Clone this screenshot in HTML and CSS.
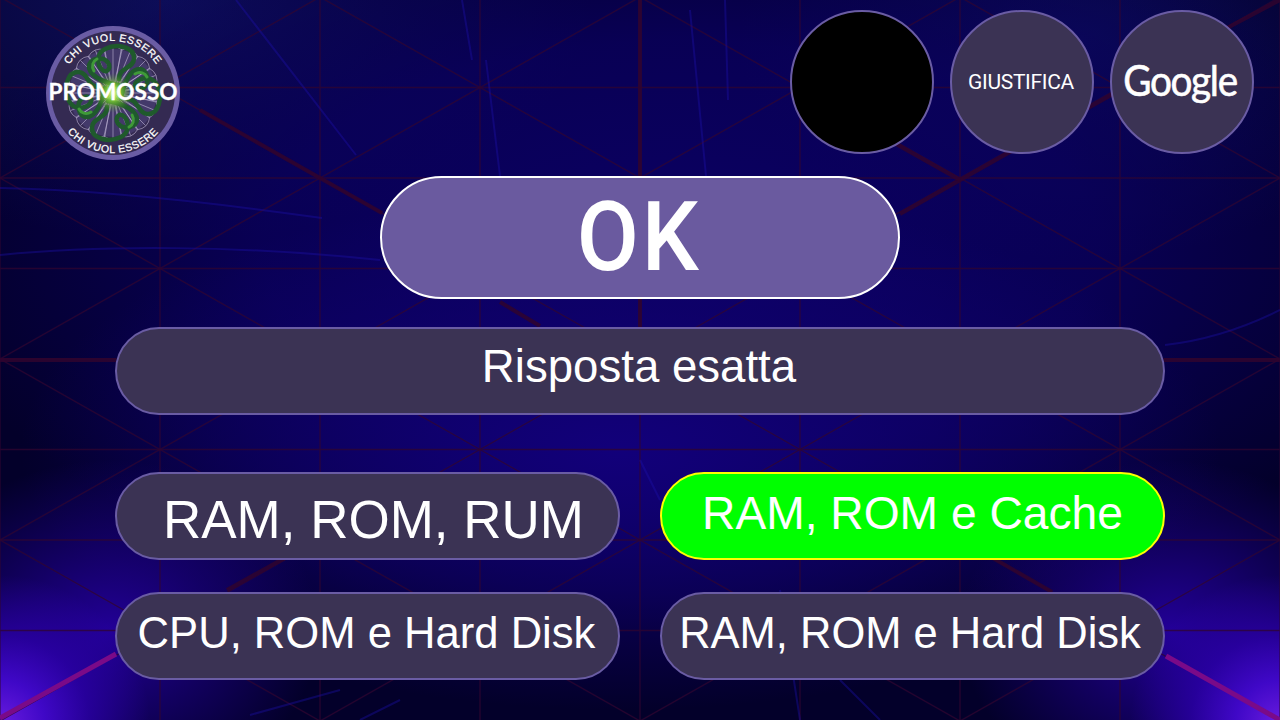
FILE: index.html
```html
<!DOCTYPE html>
<html lang="it">
<head>
<meta charset="utf-8">
<title>Chi vuol essere promosso</title>
<link rel="stylesheet" href="styles.css">
</head>
<body>
<svg class="backdrop" viewBox="0 0 1280 720" aria-hidden="true">
  <defs>
    <pattern id="lattice" width="320" height="181" patternUnits="userSpaceOnUse" y="-3">
      <path class="tile-line" d="M0 0L320 181M0 181L320 0"/>
      <path class="tile-line" d="M0 0H320M0 90.5H320M0 181H320M0 0V181M160 0V181M320 0V181"/>
    </pattern>
  </defs>
  <rect width="1280" height="720" fill="url(#lattice)"/>
  <g class="beam">
    <path d="M200 110L320 178L382 213"/>
    <path d="M640 0V176"/>
    <path d="M0 360H116"/>
    <path d="M1164 360H1280"/>
    <path d="M900 214L1120 90"/>
    <path d="M1227 28L1280 0"/>
    <path d="M880 135L960 180"/>
    <path d="M227 590L290 555"/>
    <path d="M991 557L1052 592"/>
    <path d="M500 302L540 326"/>
    <path d="M640 298V328"/>
  </g>
  <g class="beam-hot">
    <path d="M0 718L116 654"/>
    <path d="M1166 656L1280 720"/>
  </g>
  <g class="arc">
    <path d="M0 188C110 190 230 205 322 218"/>
    <path d="M0 255C100 245 240 245 380 260"/>
    <path d="M236 0L356 155"/>
    <path d="M462 0L472 60M486 60L500 176"/>
    <path d="M690 10L706 176M725 0L728 100"/>
    <path d="M1165 345C1210 340 1250 325 1280 310"/>
    <path d="M640 460L660 500M780 590L800 720M840 680L880 720"/>
    <path d="M400 700L360 720M340 690L250 715"/>
  </g>
</svg>

<main class="stage">
  <header class="topbar">
    <svg class="logo" viewBox="-68 -68 136 136" role="img" aria-label="Chi vuol essere promosso">
      <defs>
        <radialGradient id="core">
          <stop offset="0" stop-color="#e8ff9a"/>
          <stop offset=".35" stop-color="#8fdc3c" stop-opacity=".85"/>
          <stop offset="1" stop-color="#3c7a2a" stop-opacity="0"/>
        </radialGradient>
        <path id="arc-top" d="M-52 0A52 52 0 0 1 52 0"/>
        <path id="arc-bottom" d="M-60 0A60 60 0 0 0 60 0"/>
        <g id="spoke">
          <path class="spoke-line" d="M0 -4L-9 -43M0 -4L9 -43M0 -4L0 -46M-9 -43Q0 -50 9 -43"/>
        </g>
        <g id="knot">
          <path class="ribbon" d="M5 -8C-26 -14 -30 -30 -17 -34C-6 -37 0 -26 -6 -22C-14 -20 -20 -38 -8 -44C4 -50 22 -46 21 -34C20 -24 6 -26 6 -14"/>
          <path class="ribbon-hi" d="M-19 -22C-22 -27 -20 -32 -16 -34"/>
        </g>
      </defs>
      <circle class="logo-rim" r="67"/>
      <circle class="logo-face" r="62"/>
      <circle class="logo-inner" r="44"/>
      <g>
        <use href="#spoke"/><use href="#spoke" transform="rotate(22.5)"/><use href="#spoke" transform="rotate(45)"/><use href="#spoke" transform="rotate(67.5)"/>
        <use href="#spoke" transform="rotate(90)"/><use href="#spoke" transform="rotate(112.5)"/><use href="#spoke" transform="rotate(135)"/><use href="#spoke" transform="rotate(157.5)"/>
        <use href="#spoke" transform="rotate(180)"/><use href="#spoke" transform="rotate(202.5)"/><use href="#spoke" transform="rotate(225)"/><use href="#spoke" transform="rotate(247.5)"/>
        <use href="#spoke" transform="rotate(270)"/><use href="#spoke" transform="rotate(292.5)"/><use href="#spoke" transform="rotate(315)"/><use href="#spoke" transform="rotate(337.5)"/>
      </g>
      <g>
        <use href="#knot"/><use href="#knot" transform="rotate(90)"/><use href="#knot" transform="rotate(180)"/><use href="#knot" transform="rotate(270)"/>
      </g>
      <circle r="20" fill="url(#core)"/>
      <text class="logo-arc"><textPath href="#arc-top" startOffset="50%" text-anchor="middle">CHI VUOL ESSERE</textPath></text>
      <text class="logo-arc"><textPath href="#arc-bottom" startOffset="50%" text-anchor="middle">CHI VUOL ESSERE</textPath></text>
      <text class="logo-title" x="0" y="7" text-anchor="middle" textLength="129" lengthAdjust="spacingAndGlyphs">PROMOSSO</text>
    </svg>
    <nav class="lifelines">
      <div class="lifeline lifeline-empty"></div>
      <div class="lifeline"><span class="lifeline-text">GIUSTIFICA</span></div>
      <div class="lifeline"><span class="lifeline-brand">Google</span></div>
    </nav>
  </header>

  <section class="verdict"><span class="verdict-text">OK</span></section>
  <section class="question">Risposta esatta</section>

  <section class="answers">
    <div class="answer answer-large">RAM, ROM, RUM</div>
    <div class="answer answer-correct">RAM, ROM e Cache</div>
    <div class="answer answer-left">CPU, ROM e Hard Disk</div>
    <div class="answer answer-right">RAM, ROM e Hard Disk</div>
  </section>
</main>
</body>
</html>
```
FILE: styles.css
```css
* { box-sizing: border-box; }

html, body { margin: 0; height: 100%; }

body {
  position: relative;
  width: 1280px;
  height: 720px;
  overflow: hidden;
  font-family: "Liberation Sans", Arial, sans-serif;
  color: #fff;
  background:
    radial-gradient(circle 150px at 0 725px, #6a1ce0 0%, rgba(66, 8, 205, .95) 30%, rgba(48, 0, 180, .65) 60%, rgba(40, 0, 160, 0) 100%),
    radial-gradient(circle 150px at 1280px 725px, #6a1ce0 0%, rgba(66, 8, 205, .95) 30%, rgba(48, 0, 180, .65) 60%, rgba(40, 0, 160, 0) 100%),
    radial-gradient(ellipse 210px 170px at 110px 630px, rgba(40, 0, 170, .85) 0%, rgba(36, 0, 160, .45) 50%, rgba(30, 0, 140, 0) 100%),
    radial-gradient(ellipse 210px 170px at 1170px 630px, rgba(40, 0, 170, .85) 0%, rgba(36, 0, 160, .45) 50%, rgba(30, 0, 140, 0) 100%),
    radial-gradient(ellipse 600px 260px at 620px 450px, #12007a 0%, rgba(16, 0, 110, .6) 55%, rgba(8, 0, 70, 0) 100%),
    radial-gradient(ellipse 760px 380px at 680px 250px, #0b0064 0%, rgba(10, 0, 95, .8) 55%, rgba(8, 0, 70, 0) 100%),
    radial-gradient(ellipse 420px 240px at 170px 0, #0d0e58 0%, rgba(12, 13, 85, 0) 100%),
    radial-gradient(ellipse 340px 220px at 1080px 40px, #0a0a54 0%, rgba(10, 10, 82, 0) 100%),
    #03002a;
}

.backdrop {
  position: absolute;
  inset: 0;
  width: 1280px;
  height: 720px;
}

.tile-line {
  fill: none;
  stroke: #30042e;
  stroke-opacity: .75;
  stroke-width: 1.3;
}

.beam path {
  fill: none;
  stroke: #30042e;
  stroke-opacity: .85;
  stroke-width: 4;
}

.beam-hot path {
  fill: none;
  stroke: #7a0a88;
  stroke-width: 5;
}

.arc path {
  fill: none;
  stroke: #1c10a8;
  stroke-opacity: .4;
  stroke-width: 2;
}

.stage {
  position: relative;
  display: flex;
  flex-direction: column;
  height: 720px;
  padding: 10px 26px 0 115px;
}

.topbar {
  display: flex;
  justify-content: space-between;
  align-items: flex-start;
  height: 154px;
  margin-left: -70px;
}

.logo {
  width: 136px;
  height: 136px;
  margin-top: 15px;
  overflow: visible;
}

.logo-rim { fill: #6a5ca4; }
.logo-face { fill: #342a52; }
.logo-inner { fill: #43396a; }

.spoke-line {
  fill: none;
  stroke: #b9aed0;
  stroke-width: .6;
}

.ribbon {
  fill: none;
  stroke: #1f5a2c;
  stroke-width: 4.5;
  stroke-linecap: round;
}

.ribbon-hi {
  fill: none;
  stroke: #3f9a38;
  stroke-width: 3;
  stroke-linecap: round;
}

.logo-arc {
  fill: #fff;
  stroke: #fff;
  stroke-width: .25;
  font-family: "Liberation Sans", Arial, sans-serif;
  font-size: 10.5px;
  letter-spacing: .6px;
}

.logo-title {
  fill: #fff;
  stroke: #fff;
  stroke-width: .3;
  font-family: Lato, sans-serif;
  font-size: 22px;
  font-weight: 700;
}

.lifelines {
  display: flex;
  gap: 16px;
}

.lifeline {
  display: flex;
  align-items: center;
  justify-content: center;
  width: 144px;
  height: 144px;
  border: 2.5px solid #6a5ca4;
  border-radius: 50%;
  background: #3b3354;
}

.lifeline-empty { background: #000; }

.lifeline-text {
  margin-right: 2px;
  font-family: Roboto, sans-serif;
  font-size: 21px;
  letter-spacing: -.3px;
}

.lifeline-brand {
  display: inline-block;
  margin: -6px 0 0 -3px;
  font-family: Lato, sans-serif;
  font-size: 43px;
  letter-spacing: -1.5px;
  -webkit-text-stroke: .6px #fff;
  transform: scaleX(.9);
}

.verdict {
  align-self: center;
  display: flex;
  align-items: center;
  justify-content: center;
  width: 520px;
  height: 123px;
  margin: 12px 0 0 -89px;
  border: 2.5px solid #fff;
  border-radius: 62px;
  background: #6a5a9f;
}

.verdict-text {
  display: inline-block;
  margin-left: -2px;
  font-family: Roboto, sans-serif;
  font-size: 97px;
  font-weight: 500;
  letter-spacing: 3px;
  line-height: 1;
  transform: scaleX(.93);
}

.question {
  display: flex;
  align-items: center;
  justify-content: center;
  width: 1050px;
  height: 88px;
  margin-top: 28px;
  padding: 0 2px 8px 0;
  border: 2.5px solid #6a5ca4;
  border-radius: 44px;
  background: #3b3354;
  font-size: 45.6px;
}

.answers {
  display: grid;
  grid-template-columns: 505px 505px;
  gap: 32px 40px;
  width: 1050px;
  margin-top: 57px;
}

.answer {
  display: flex;
  align-items: center;
  justify-content: center;
  height: 88px;
  padding-bottom: 6px;
  border: 2.5px solid #6a5ca4;
  border-radius: 44px;
  background: #3b3354;
  font-size: 44px;
  white-space: nowrap;
}

.answer-large {
  padding: 6px 0 0 12px;
  font-size: 53px;
}

.answer-correct {
  font-size: 46.2px;
  border-color: #ffff00;
  background: #00ff00;
}

.answer-left {
  padding-right: 2px;
  font-size: 43.6px;
}

.answer-right {
  padding-right: 5px;
  font-size: 43.5px;
}
```
